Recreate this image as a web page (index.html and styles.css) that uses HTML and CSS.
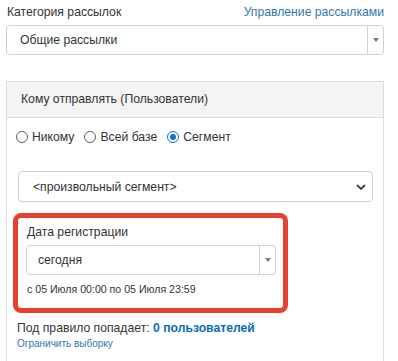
FILE: index.html
```html
<!DOCTYPE html>
<html lang="ru">
<head>
<meta charset="utf-8">
<link rel="stylesheet" href="styles.css">
</head>
<body>
<div class="page">
  <div class="top-row">
    <span class="label">Категория рассылок</span>
    <a class="link" href="#">Управление рассылками</a>
  </div>
  <div class="combo combo-main">
    <span class="combo-text">Общие рассылки</span>
    <span class="combo-arrow"><span class="tri"></span></span>
  </div>

  <div class="panel">
    <div class="panel-head">Кому отправлять (Пользователи)</div>
    <div class="panel-body">
      <div class="radios">
        <label class="radio"><span class="dot"></span>Никому</label>
        <label class="radio"><span class="dot"></span>Всей базе</label>
        <label class="radio"><span class="dot checked"></span>Сегмент</label>
      </div>
      <div class="native-select">
        <span class="ns-text">&lt;произвольный сегмент&gt;</span>
        <svg class="chev" width="10" height="6" viewBox="0 0 10 6"><path d="M1 1 L5 5 L9 1" fill="none" stroke="#444" stroke-width="1.8"/></svg>
      </div>
      <div class="rule">
        <div class="rule-label">Дата регистрации</div>
        <div class="combo combo-rule">
          <span class="combo-text">сегодня</span>
          <span class="combo-arrow"><span class="tri"></span></span>
        </div>
        <div class="range">с 05 Июля 00:00 по 05 Июля 23:59</div>
      </div>
      <div class="count">Под правило попадает: <b>0 пользователей</b></div>
      <a class="limit" href="#">Ограничить выборку</a>
    </div>
  </div>
</div>
</body>
</html>
```
FILE: styles.css
```css
html, body {
  margin: 0;
  padding: 0;
  background: #fff;
}
body {
  font-family: "Liberation Sans", Arial, sans-serif;
  font-size: 12.2px;
  color: #333;
}
.page {
  width: 378px;
  padding: 0 14px 0 6px;
}
.top-row {
  display: flex;
  justify-content: space-between;
  align-items: center;
  margin-top: 3px;
  height: 18px;
  line-height: 18px;
  padding-left: 1px;
}
.link {
  color: #2f78b3;
  text-decoration: none;
}
.combo {
  display: flex;
  align-items: stretch;
  border: 1px solid #d0d0d0;
  border-radius: 4px;
  background: #fff;
  box-sizing: border-box;
}
.combo-main {
  margin-top: 4px;
  height: 30px;
}
.combo-text {
  flex: 1;
  display: flex;
  align-items: center;
  padding-left: 13px;
}
.combo-arrow {
  width: 15px;
  border-left: 1px solid #d0d0d0;
  display: flex;
  align-items: center;
  justify-content: center;
}
.tri {
  width: 0;
  height: 0;
  border-left: 3px solid transparent;
  border-right: 3px solid transparent;
  border-top: 4px solid #777;
}
.panel {
  margin-top: 26px;
  border: 1px solid #ddd;
  border-bottom: none;
  height: 290px;
}
.panel-head {
  height: 35px;
  line-height: 35px;
  background: #f4f4f4;
  border-bottom: 1px solid #ddd;
  padding-left: 14px;
}
.panel-body {
  padding: 10px 10px 0 10px;
}
.radios {
  display: flex;
  align-items: center;
  height: 18px;
  margin-left: -1px;
  gap: 10px;
}
.radio {
  display: flex;
  align-items: center;
  gap: 4px;
}
.dot {
  width: 12px;
  height: 12px;
  box-sizing: border-box;
  border: 1px solid #5f5f5f;
  border-radius: 50%;
  background: #fff;
  position: relative;
}
.dot.checked {
  border: 1.5px solid #0f6fd8;
}
.dot.checked::after {
  content: "";
  position: absolute;
  left: 1.5px;
  top: 1.5px;
  width: 6px;
  height: 6px;
  border-radius: 50%;
  background: #0f6fd8;
}
.native-select {
  margin: 25px 0 0 1px;
  height: 31px;
  box-sizing: border-box;
  border: 1px solid #cfcfcf;
  border-radius: 4px;
  display: flex;
  align-items: center;
  justify-content: space-between;
  padding: 0 6px 0 14px;
}
.chev {
  display: block;
}
.rule {
  margin: 11px 0 0 -4px;
  width: 275px;
  box-sizing: border-box;
  border: 5px solid #e6402f;
  border-radius: 8px;
  padding: 5px 8px 12px 8px;
}
.rule-label {
  line-height: 18px;
  padding-left: 1px;
}
.combo-rule {
  margin-top: 4px;
  height: 30px;
  width: 250px;
}
.combo-rule .combo-text {
  padding-left: 11px;
}
.range {
  margin-top: 7px;
  font-size: 10.6px;
  line-height: 14px;
  padding-left: 1px;
}
.count {
  margin-top: 6px;
  line-height: 18px;
}
.count b {
  color: #0b6cb5;
}
.limit {
  display: block;
  font-size: 10px;
  line-height: 14px;
  color: #2f78b3;
  text-decoration: none;
}
```
